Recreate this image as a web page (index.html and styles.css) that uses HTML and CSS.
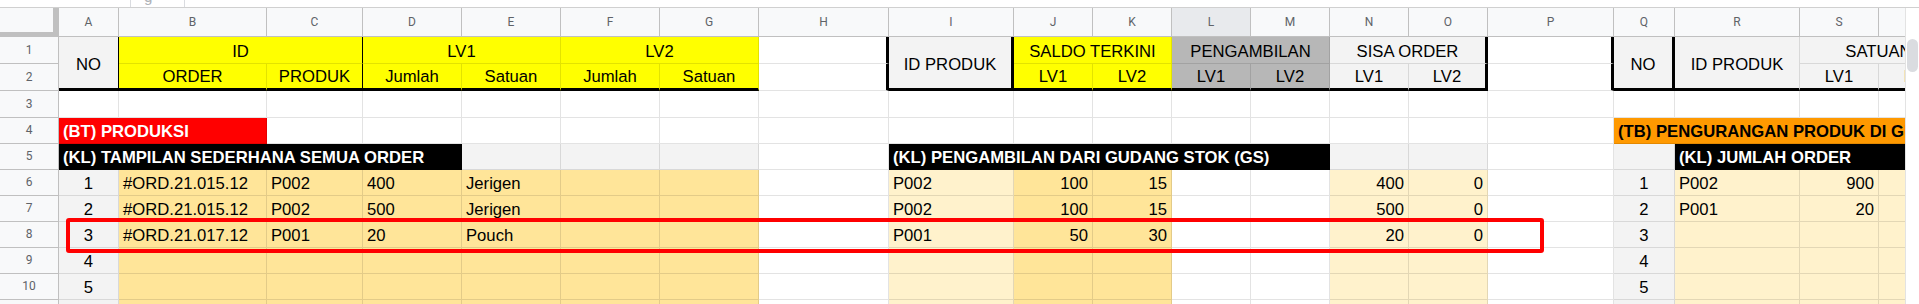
FILE: index.html
```html
<!DOCTYPE html>
<html>
<head>
<meta charset="utf-8">
<link rel="stylesheet" href="styles.css">
</head>
<body>
<div class="app">
  <div class="topbar">
    <div class="tb-gap"></div>
    <div class="tb-sep"></div>
    <div class="tb-fx"><span>g</span></div>
    <div class="tb-sep"></div>
  </div>
  <div class="main">
    <div class="viewport">
      <div class="grid">
        <!-- column headers -->
        <div class="corner"></div>
        <div class="ch">A</div><div class="ch">B</div><div class="ch">C</div><div class="ch">D</div><div class="ch">E</div><div class="ch">F</div><div class="ch">G</div><div class="ch">H</div><div class="ch">I</div><div class="ch">J</div><div class="ch">K</div><div class="ch sel">L</div><div class="ch">M</div><div class="ch">N</div><div class="ch">O</div><div class="ch">P</div><div class="ch">Q</div><div class="ch">R</div><div class="ch">S</div><div class="ch">T</div>

        <!-- row 1 -->
        <div class="rh">1</div>
        <div class="lg c m rs2 tb br">NO</div>
        <div class="yl c s2 br">ID</div>
        <div class="yl c s2">LV1</div>
        <div class="yl c s2">LV2</div>
        <div class="tr"></div>
        <div class="lg c m rs2 tb tr">ID PRODUK</div>
        <div class="yl c s2">SALDO TERKINI</div>
        <div class="gr c s2">PENGAMBILAN</div>
        <div class="lg c s2 tr">SISA ORDER</div>
        <div class="tr"></div>
        <div class="lg c m rs2 tb tr">NO</div>
        <div class="lg c m rs2 tb">ID PRODUK</div>
        <div class="lg c s2">SATUAN</div>

        <!-- row 2 -->
        <div class="rh">2</div>
        <div class="yl c tb">ORDER</div>
        <div class="yl c tb br">PRODUK</div>
        <div class="yl c tb">Jumlah</div>
        <div class="yl c tb">Satuan</div>
        <div class="yl c tb">Jumlah</div>
        <div class="yl c tb">Satuan</div>
        <div class="tr"></div>
        <div class="yl c tb">LV1</div>
        <div class="yl c tb">LV2</div>
        <div class="gr c tb">LV1</div>
        <div class="gr c tb">LV2</div>
        <div class="lg c tb">LV1</div>
        <div class="lg c tb tr">LV2</div>
        <div class="tr"></div>
        <div class="lg c tb">LV1</div>
        <div class="lg c tb">LV2</div>

        <!-- row 3 -->
        <div class="rh">3</div>
        <div></div><div></div><div></div><div></div><div></div><div></div><div></div><div></div><div></div><div></div>
        <div></div><div></div><div></div><div></div><div></div><div></div><div></div><div></div><div></div><div></div>

        <!-- row 4 -->
        <div class="rh">4</div>
        <div class="rd b s2">(BT) PRODUKSI</div>
        <div></div><div></div><div></div><div></div><div></div><div></div><div></div>
        <div></div><div></div><div></div><div></div><div></div><div></div><div></div>
        <div class="or b s4">(TB) PENGURANGAN PRODUK DI GUDANG STOK (GS)</div>

        <!-- row 5 -->
        <div class="rh">5</div>
        <div class="bk b s4">(KL) TAMPILAN SEDERHANA SEMUA ORDER</div>
        <div class="lg"></div><div class="lg"></div><div class="lg"></div>
        <div></div>
        <div class="bk b s5">(KL) PENGAMBILAN DARI GUDANG STOK (GS)</div>
        <div class="lg"></div><div class="lg"></div>
        <div></div>
        <div class="lg"></div>
        <div class="bk b s3">(KL) JUMLAH ORDER</div>

        <!-- row 6 -->
        <div class="rh">6</div>
        <div class="lg c">1</div>
        <div class="o1">#ORD.21.015.12</div><div class="o1">P002</div><div class="o1">400</div><div class="o1">Jerigen</div><div class="o1"></div><div class="o1"></div>
        <div></div>
        <div class="o2">P002</div><div class="o1 r">100</div><div class="o1 r">15</div>
        <div></div><div></div>
        <div class="o2 r">400</div><div class="o2 r">0</div>
        <div></div>
        <div class="lg c">1</div>
        <div class="o2">P002</div><div class="o2 r">900</div><div class="o2"></div>

        <!-- row 7 -->
        <div class="rh">7</div>
        <div class="lg c">2</div>
        <div class="o1">#ORD.21.015.12</div><div class="o1">P002</div><div class="o1">500</div><div class="o1">Jerigen</div><div class="o1"></div><div class="o1"></div>
        <div></div>
        <div class="o2">P002</div><div class="o1 r">100</div><div class="o1 r">15</div>
        <div></div><div></div>
        <div class="o2 r">500</div><div class="o2 r">0</div>
        <div></div>
        <div class="lg c">2</div>
        <div class="o2">P001</div><div class="o2 r">20</div><div class="o2"></div>

        <!-- row 8 -->
        <div class="rh">8</div>
        <div class="lg c">3</div>
        <div class="o1">#ORD.21.017.12</div><div class="o1">P001</div><div class="o1">20</div><div class="o1">Pouch</div><div class="o1"></div><div class="o1"></div>
        <div></div>
        <div class="o2">P001</div><div class="o1 r">50</div><div class="o1 r">30</div>
        <div></div><div></div>
        <div class="o2 r">20</div><div class="o2 r">0</div>
        <div></div>
        <div class="lg c">3</div>
        <div class="o2"></div><div class="o2"></div><div class="o2"></div>

        <!-- row 9 -->
        <div class="rh">9</div>
        <div class="lg c">4</div>
        <div class="o1"></div><div class="o1"></div><div class="o1"></div><div class="o1"></div><div class="o1"></div><div class="o1"></div>
        <div></div>
        <div class="o2"></div><div class="o1"></div><div class="o1"></div>
        <div></div><div></div>
        <div class="o2"></div><div class="o2"></div>
        <div></div>
        <div class="lg c">4</div>
        <div class="o2"></div><div class="o2"></div><div class="o2"></div>

        <!-- row 10 -->
        <div class="rh">10</div>
        <div class="lg c">5</div>
        <div class="o1"></div><div class="o1"></div><div class="o1"></div><div class="o1"></div><div class="o1"></div><div class="o1"></div>
        <div></div>
        <div class="o2"></div><div class="o1"></div><div class="o1"></div>
        <div></div><div></div>
        <div class="o2"></div><div class="o2"></div>
        <div></div>
        <div class="lg c">5</div>
        <div class="o2"></div><div class="o2"></div><div class="o2"></div>

        <!-- row 11 -->
        <div class="rh">11</div>
        <div class="lg c">6</div>
        <div class="o1"></div><div class="o1"></div><div class="o1"></div><div class="o1"></div><div class="o1"></div><div class="o1"></div>
        <div></div>
        <div class="o2"></div><div class="o1"></div><div class="o1"></div>
        <div></div><div></div>
        <div class="o2"></div><div class="o2"></div>
        <div></div>
        <div class="lg c">6</div>
        <div class="o2"></div><div class="o2"></div><div class="o2"></div>
      </div>
    </div>
    <div class="scroll"><div class="thumb"></div></div>
  </div>
  <div class="highlight"></div>
</div>
</body>
</html>
```

FILE: styles.css
```css
* { box-sizing: border-box; }
html, body { margin: 0; padding: 0; background: #fff; }
body { font-family: "Liberation Sans", Arial, sans-serif; overflow: hidden; }

.app { position: relative; width: 1919px; height: 304px; overflow: hidden; }

.topbar { height: 8px; border-bottom: 1px solid #d0d0d0; display: flex; overflow: hidden; }
.tb-gap { width: 130px; }
.tb-sep { width: 1px; background: #dadce0; }
.tb-fx { width: 53px; position: relative; overflow: hidden; }
.tb-fx span { position: absolute; left: 13px; top: -12px; font-family: Roboto, sans-serif; font-size: 15px; color: #b0b3b8; }

.main { display: flex; height: 296px; }
.viewport { width: 1905px; overflow: hidden; }
.scroll { width: 14px; border-left: 1px solid #e3e3e3; padding: 31px 0 0 1px; }
.thumb { width: 11px; height: 33px; background: #dadce0; border-radius: 6px; }

.grid {
  display: grid;
  width: 1957px;
  grid-template-columns: 59px 60px 148px 96px 99px 99px 99px 99px 130px 125px 79px 79px 79px 79px 79px 79px 126px 61px 125px 79px 79px;
  grid-template-rows: 29px 27px 27px 27px repeat(8, 26px);
}
.grid > div {
  display: flex;
  align-items: flex-end;
  padding: 0 4px 2px;
  border-right: 1px solid rgba(0, 0, 0, 0.11);
  border-bottom: 1px solid rgba(0, 0, 0, 0.11);
  font-size: 16.67px;
  line-height: 19px;
  color: #000;
  white-space: nowrap;
  overflow: hidden;
}

.grid > .corner {
  background: #f8f9fa;
  border-right: 6px solid #c0c0c0;
  border-bottom: 5px solid #c0c0c0;
}
.grid > .ch, .grid > .rh {
  background: #f8f9fa;
  border-right: 1px solid #c0c0c0;
  border-bottom: 1px solid #c0c0c0;
  justify-content: center;
  align-items: center;
  padding: 0;
  font-family: Roboto, "Liberation Sans", sans-serif;
  font-size: 12px;
  color: #5f6368;
}
.grid > .ch.sel { background: #e8eaed; }

.grid > .c { justify-content: center; }
.grid > .r { justify-content: flex-end; }
.grid > .m { align-items: center; padding: 4px 4px 0; }
.grid > .b { font-weight: bold; }

.s2 { grid-column: span 2; }
.s3 { grid-column: span 3; }
.s4 { grid-column: span 4; }
.s5 { grid-column: span 5; }
.rs2 { grid-row: span 2; }

.yl { background: #ffff00; }
.gr { background: #b7b7b7; }
.lg { background: #f3f3f3; }
.rd { background: #ff0000; }
.grid > .rd { color: #fff; }
.or { background: #ff9900; }
.bk { background: #000; }
.grid > .bk { color: #fff; }
.o1 { background: #ffe599; }
.o2 { background: #fff2cc; }

.grid > .tb { border-bottom: 3px solid #000; }
.grid > .tr { border-right: 3px solid #000; }
.grid > .br { border-right-color: #000; }

.highlight {
  position: absolute;
  left: 66px;
  top: 218px;
  width: 1478px;
  height: 35px;
  border: 4px solid #ff0000;
  border-radius: 3px;
}
```
